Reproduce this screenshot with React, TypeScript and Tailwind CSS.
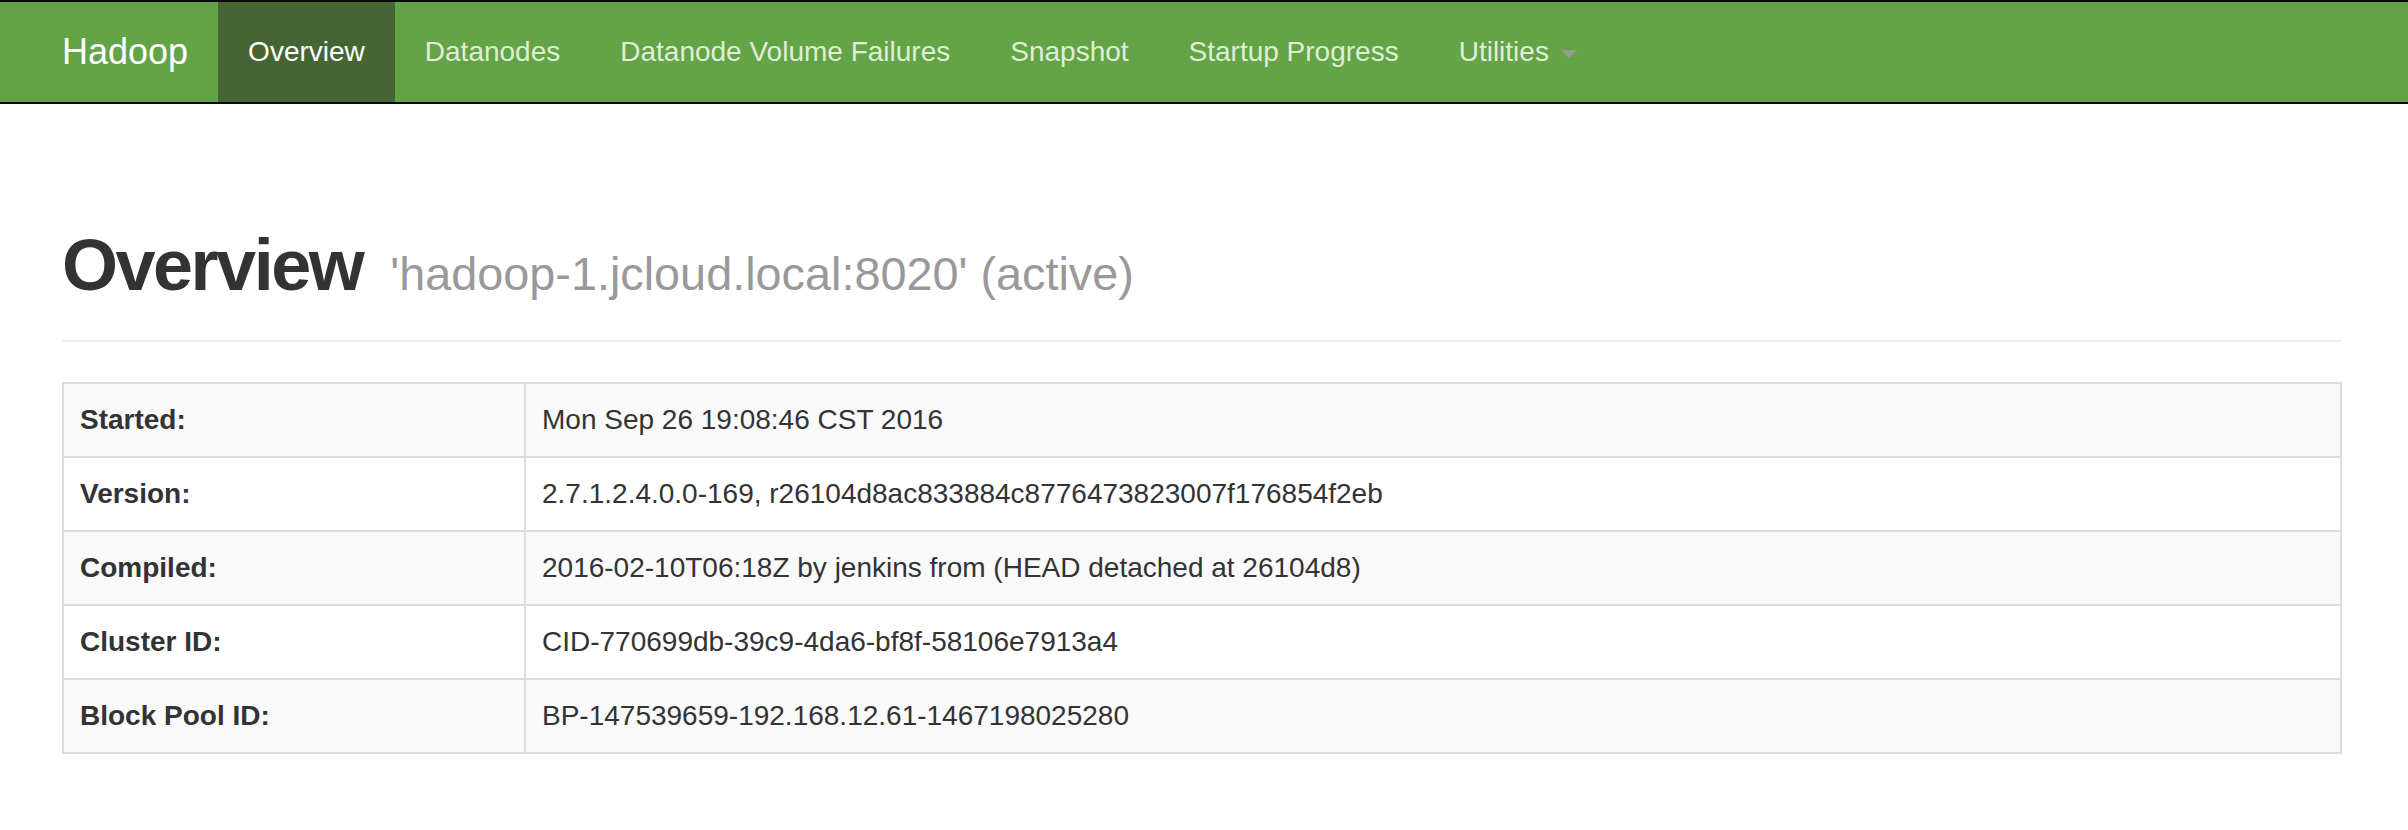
const links = [
  { name: "Overview", active: true },
  { name: "Datanodes" },
  { name: "Datanode Volume Failures" },
  { name: "Snapshot" },
  { name: "Startup Progress" },
];

const rows = [
  { label: "Started:", value: "Mon Sep 26 19:08:46 CST 2016" },
  { label: "Version:", value: "2.7.1.2.4.0.0-169, r26104d8ac833884c8776473823007f176854f2eb" },
  { label: "Compiled:", value: "2016-02-10T06:18Z by jenkins from (HEAD detached at 26104d8)" },
  { label: "Cluster ID:", value: "CID-770699db-39c9-4da6-bf8f-58106e7913a4" },
  { label: "Block Pool ID:", value: "BP-147539659-192.168.12.61-1467198025280" },
];

function Navbar() {
  return (
    <nav className="h-[104px] bg-[#62a446] border-y-2 border-[#080808]">
      <div className="max-w-[2344px] mx-auto flex items-stretch">
        <a className="block px-[30px] py-[30px] text-[36px] leading-[40px] text-white">
          Hadoop
        </a>
        <ul className="flex">
          {links.map((l) => (
            <li key={l.name}>
              <a
                className={
                  l.active
                    ? "block px-[30px] py-[30px] text-[28px] leading-[40px] bg-[#466535] text-white"
                    : "block px-[30px] py-[30px] text-[28px] leading-[40px] text-[#e0edd8]"
                }
              >
                {l.name}
              </a>
            </li>
          ))}
          <li>
            <a className="block px-[30px] py-[30px] text-[28px] leading-[40px] text-[#e0edd8]">
              Utilities{" "}
              <span className="inline-block align-middle ml-[4px] w-0 h-0 border-t-[8px] border-x-[8px] border-t-[#999] border-x-transparent" />
            </a>
          </li>
        </ul>
      </div>
    </nav>
  );
}

export default function App() {
  return (
    <div className="min-h-[830px] bg-white text-[#333] font-['Liberation_Sans',Arial,sans-serif]">
      <Navbar />
      <div className="max-w-[2344px] mx-auto pl-[30px] pr-[34px]">
        <div className="mt-[122px] pb-[35px] border-b-2 border-[#eeeeee]">
          <h1 className="m-0 text-[72px] leading-[79px] font-bold tracking-[-2.5px]">
            Overview
            <small className="ml-[28px] text-[46.8px] leading-none font-normal tracking-normal text-[#999]">
              'hadoop-1.jcloud.local:8020' (active)
            </small>
          </h1>
        </div>
        <table className="mt-[40px] w-full table-fixed border-collapse border-2 border-[#dddddd] text-[28px] leading-[40px]">
          <colgroup>
            <col className="w-[462px]" />
            <col />
          </colgroup>
          <tbody>
            {rows.map((r, i) => (
              <tr key={r.label} className={i % 2 === 0 ? "bg-[#f9f9f9]" : "bg-white"}>
                <th className="p-[16px] text-left font-bold border-2 border-[#dddddd]">{r.label}</th>
                <td className="p-[16px] border-2 border-[#dddddd]">{r.value}</td>
              </tr>
            ))}
          </tbody>
        </table>
      </div>
    </div>
  );
}
